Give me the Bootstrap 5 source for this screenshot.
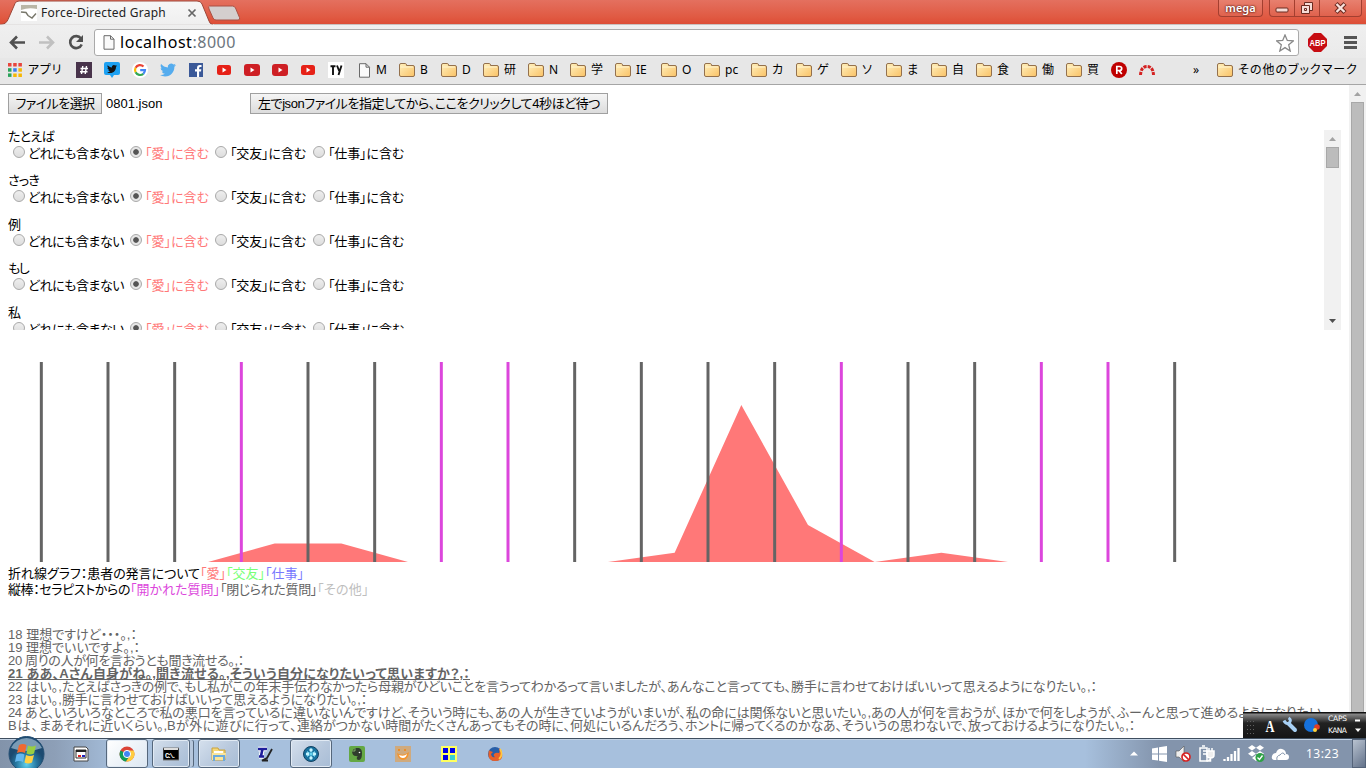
<!DOCTYPE html>
<html lang="ja">
<head>
<meta charset="utf-8">
<title>Force-Directed Graph</title>
<link href="https://cdn.jsdelivr.net/npm/bootstrap@5.3.0/dist/css/bootstrap.min.css" rel="stylesheet">
<style>
html,body{height:768px;overflow:hidden}
body{font-family:"Liberation Sans","Noto Sans CJK JP",sans-serif;font-size:13px;line-height:16px;color:#000;background:#fff}
svg{display:block;flex:none}
.ui{font-family:"Noto Sans","Noto Sans CJK JP",sans-serif}
.fit{display:inline-block;white-space:nowrap;font-feature-settings:"palt"}
.titlebar{height:25px;background:linear-gradient(#e4705f,#e05a43 70%,#dd4d35);border-bottom:1px solid #c9c0be}
.tabtitle{left:41px;top:5px;font-size:12px;color:#222}
.tabshape{left:0;top:0}
.capbtn{height:17px;border:1px solid #a33f30;border-top:0;background:linear-gradient(#e8806f,#e0624d);color:#fff}
.user{width:45px;font-size:11px;font-weight:600;text-shadow:0 0 2px #602018,0 0 2px #602018;margin-right:6px;border-radius:0 0 4px 4px}
.wins{width:93px;margin-right:4px;border-radius:0 0 4px 4px}
.wins>span{width:25px;height:16px;border-right:1px solid #a33f30}
.toolbar{height:33px;background:linear-gradient(#efefef,#eaeaea)}
.omni{left:94px;top:4px;width:1205px;height:27px;border:1px solid #aaa;border-radius:3px;background:#fff;font-size:16px}
.omni .fit{margin:-2px 0 0 5px}
.bookmarks{height:27px;background:#e7e7e7;border-bottom:1px solid #a5a5a5;box-sizing:border-box;font-size:12px;padding:0 0 2px 7px}
.bm{height:24px;white-space:nowrap;flex:none}
.bm .lab{margin-left:5px}
.page{height:653px}
.old{border:1px solid #a0a0a0;background:linear-gradient(#f5f5f5,#dcdcdc);height:21px;padding:0;line-height:18px;font-size:13px;color:#000;white-space:nowrap;text-align:center;flex:none}
.words{margin:16px 8px 0 8px;height:200px;overflow:hidden}
.word{height:44px}
.word>div{height:17px;line-height:14px}
.word>.opts{padding-left:5px;height:15px}
.opts>span{margin-bottom:2px}
.rad{width:12px;height:12px;border:1px solid #a9a9a9;border-radius:50%;background:linear-gradient(#eee,#ddd);flex:none;margin:0 3px 5px 0}
.rad.on{background:radial-gradient(circle,#555 0 2.4px,#e6e6e6 3.2px)}
.love{color:#ff7878}.friend{color:#78ff78}.work{color:#7878ff}.openq{color:#dc46dc}.closedq{color:#646464}.otherq{color:#bebebe}
.bar17{width:17px;background:#f1f1f1;flex:none}
.thumb{width:13px;background:#bcbcbc;border:1px solid #a8a8a8}
.chart{margin-top:32px}
.talk{color:#646464;line-height:13px;margin:30px 0 0 8px}
.talk>div{height:13px;white-space:nowrap}
.ime{right:0;top:712px;width:123px;height:26px;background:linear-gradient(#111 0 1px,#888 2px,#222 11px,#151515)}
.taskbar{height:30px;background:linear-gradient(90deg,#8293aa 0,#8d9fb7 55px,#a7c0dd 120px,#a7c0dd 1085px,#8394ac 1160px);border-top:1px solid #3f4e5f;box-shadow:inset 0 1px #c3d3e5}
.task{width:42px;height:29px;margin-right:4px;border:1px solid transparent;flex:none}
.task.run{border-color:#55677c;border-radius:3px;background:linear-gradient(135deg,#d5e0ed,#b6c7dc 60%,#a8bdd6);box-shadow:inset 0 0 0 1px #e1eaf4}
.task.act{background:linear-gradient(135deg,#fff,#dce7f2)}
.task.stack{width:38px;margin-right:8px;box-shadow:inset 0 0 0 1px #e1eaf4,4px 0 0 -1px #b6c7dc,5px 0 0 -1px #55677c}
.clock{color:#fff;font-size:12px;margin-left:14px}
.peek{width:14px;height:29px;margin-left:13px;border:1px solid #55647a;background:linear-gradient(135deg,#b8c2d0,#63728a)}
</style>
</head>
<body class="position-relative d-flex flex-column">
<svg width="0" height="0" class="position-absolute"><defs>
<linearGradient id="fg" x2="1" y2="1"><stop stop-color="#fff0bd"/><stop offset="1" stop-color="#fac266"/></linearGradient>
<linearGradient id="tg" x2="0" y2="1"><stop stop-color="#f7f7f7"/><stop offset="1" stop-color="#efefef"/></linearGradient>
<radialGradient id="orb" cy=".8"><stop stop-color="#5fd0ee"/><stop offset=".6" stop-color="#26769f"/><stop offset="1" stop-color="#1c4a70"/></radialGradient>
<symbol id="folder" viewBox="0 0 16 14"><path d="M.5 12V2q0-1.5 1.500-1.500h4.500q1 0 1 2h6.500q1.500 0 1.500 1.500v8q0 1.500-1.500 1.500H2Q.5 13.500.5 12z" fill="url(#fg)" stroke="#94714d"/><path d="M1.500 4h12.500" stroke="#fff5d0"/></symbol>
<symbol id="sheet" viewBox="0 0 12 15"><path d="M1 .7h6.500l3.500 3.500v10H1zM7.500.7v3.500H11" fill="#fafafa" stroke="#6a6a6a"/></symbol>
<symbol id="hash" viewBox="0 0 16 16"><path d="M0 0h16v16H0z" fill="#48334b"/><path d="M6.800 4 5.500 12M10.500 4 9.200 12M4.500 6.500h7.500M4 9.700h7.500" stroke="#fff" stroke-width="1.400"/></symbol>
<symbol id="birdp" viewBox="0 0 24 24"><path d="M23.950 4.570a10 10 0 0 1-2.820.78 4.960 4.960 0 0 0 2.160-2.720c-.95.55-2 .95-3.130 1.190a4.920 4.920 0 0 0-8.380 4.480C7.690 8.100 4.070 6.130 1.640 3.160a4.820 4.820 0 0 0-.67 2.480c0 1.710.87 3.210 2.190 4.100a4.900 4.900 0 0 1-2.230-.62v.06a4.920 4.920 0 0 0 3.950 4.830 5 5 0 0 1-2.210.08 4.940 4.940 0 0 0 4.600 3.420A9.870 9.870 0 0 1 0 19.540a14 14 0 0 0 7.550 2.210c9.050 0 14-7.500 14-13.980 0-.21 0-.42-.02-.63a9.940 9.940 0 0 0 2.420-2.570z"/></symbol>
<symbol id="bird" viewBox="0 0 16 16"><use href="#birdp" width="16" height="16" fill="#55acee"/></symbol>
<symbol id="tdeck" viewBox="0 0 16 16"><path d="M2 0h12q2 0 2 2v9q0 2-2 2h-4l-2 3-2-3H2q-2 0-2-2V2Q0 0 2 0z" fill="#1da1f2"/><use href="#birdp" x="3" y="2" width="10" height="10" fill="#141414"/></symbol>
<symbol id="goog" viewBox="0 0 16 16"><circle cx="8" cy="8" r="8" fill="#fff"/><g fill="none" stroke-width="2.200"><path d="M11.500 4.500A5 5 0 0 0 3.600 5.700" stroke="#ea4335"/><path d="M3.600 5.700a5 5 0 0 0 0 4.600" stroke="#fbbc05"/><path d="M3.600 10.300a5 5 0 0 0 7.700 1.500" stroke="#34a853"/><path d="M11.300 11.800A5 5 0 0 0 13 8.100H8.200" stroke="#4285f4"/></g></symbol>
<symbol id="fb" viewBox="0 0 16 16"><path d="M1 1h14v14H1z" fill="#3b5998"/><path d="M9 15V9.500H7V7.300h2V6q0-3 2.800-3H13.500v2h-1.200q-1.200 0-1.200 1.200v1.100h2.200l-.3 2.200h-1.900V15z" fill="#fff"/></symbol>
<symbol id="yt" viewBox="0 0 16 16"><rect x="1" y="3" width="14" height="10" rx="2.500" fill="#e62117"/><path d="m6.500 5.500 4 2.500-4 2.500z" fill="#fff"/></symbol>
<symbol id="yt2" viewBox="0 0 16 16"><rect y="2" width="16" height="12" rx="3" fill="#ce1f24"/><path d="m6.500 5.500 4 2.500-4 2.500z" fill="#fff"/></symbol>
<symbol id="ty" viewBox="0 0 16 16"><path d="M0 0h16v16H0z" fill="#fff"/><path d="M2.500 4.200h5M5 4v9M9 3.500l2.200 5.500M13.500 3.500l-3 9.500" stroke="#111" stroke-width="1.900" fill="none"/></symbol>
<symbol id="rr" viewBox="0 0 16 16"><circle cx="8" cy="8" r="8" fill="#bf0000"/><path d="M5.800 12V4.500h2.700q2.200 0 2.200 2t-2.200 2H5.800M8 8.500l2.800 3.500" stroke="#fff" stroke-width="1.700" fill="none"/></symbol>
<symbol id="arc" viewBox="0 0 16 16"><path d="M1.500 13Q2 4.500 8 4.500T14.500 13" fill="none" stroke="#d42222" stroke-width="3" stroke-dasharray="3.200 1"/></symbol>
<symbol id="apps" viewBox="0 0 16 16"><path d="M1 1h3.500v3.500H1zM6.200 1h3.500v3.500H6.200zM11.400 1h3.500v3.500h-3.500z" fill="#e8453c"/><path d="M1 6.200h3.500v3.500H1z" fill="#2aa35a"/><path d="M6.200 6.200h3.500v3.500H6.200z" fill="#3b7ded"/><path d="M11.400 6.200h3.500v3.500h-3.500z" fill="#f6b704"/><path d="M1 11.400h3.500v3.500H1z" fill="#2aa35a"/><path d="M6.200 11.400h3.500v3.500H6.200zM11.400 11.400h3.500v3.500h-3.500z" fill="#f6b704"/></symbol>
</defs></svg>

<header class="titlebar position-relative d-flex justify-content-end align-items-start flex-shrink-0">
  <svg class="tabshape position-absolute" width="245" height="25"><path d="M0 24.500q6 0 8-5L15 3.500Q16 1 19 1h178q4 0 5 3l7 17q1 3.500 4 3.500" fill="url(#tg)" stroke="#9c4638"/><path d="M0 25h214" stroke="#efefef"/>
  <path d="M209.500 6h23q2 0 3 2l4 9.500q1 2.500-1.500 2.500h-22q-2 0-3-2l-4-9q-1-3 .5-3z" fill="#d4cfce" stroke="#a95144"/>
  <path d="M21 5h16v16H21z" fill="#fff"/><path d="M21 5h16v4q-8-2-16 1z" fill="#b9b6a6"/><path d="M21 12l5 .5 2 3 4 2.500 4-4.500" fill="none" stroke="#77766a" stroke-width="1.400"/><path d="m188.500 9.500 7 7m0-7-7 7" stroke="#666" stroke-width="1.700"/></svg>
  <span class="tabtitle position-absolute ui"><span class="fit" data-w="125">Force-Directed Graph</span></span>
  <div class="capbtn user ui d-flex justify-content-center align-items-center">mega</div>
  <div class="capbtn wins d-flex"><span><svg width="24" height="16"><rect x="6" y="8" width="12" height="4" rx="1" fill="#f6dcd7" stroke="#6b2a20"/></svg></span><span><svg width="24" height="16" fill="#f6dcd7" stroke="#6b2a20"><path d="M9.500 2.500h8v8h-8z"/><path d="M6.500 5.500h8v8h-8zM9.500 8.500h2v2h-2z"/></svg></span><svg width="41" height="16"><path d="m16 3.500 9 9m0-9-9 9" stroke="#6b2a20" stroke-width="4.500"/><path d="m16.500 4 8 8m0-8-8 8" stroke="#f9e2dd" stroke-width="2.400"/></svg></div>
</header>

<nav class="toolbar position-relative flex-shrink-0">
  <svg width="1366" height="33"><g fill="none" stroke-width="2.600"><path d="M25 17.500H11m6-6-6 6 6 6" stroke="#505050"/><path d="M39 17.500h14m-6-6 6 6-6 6" stroke="#c0c0c0"/><path d="M81 13.500a6 6 0 1 0 .7 6" stroke="#505050"/></g><path d="M83 10v7h-7z" fill="#505050"/>
  <path d="m1314 8 7 0 6 6v7l-6 6h-7l-6-6v-7z" fill="#c70d12"/><text x="1309.500" y="21" font-size="9.500" font-weight="700" font-family="Liberation Sans" fill="#fff" textLength="16" lengthAdjust="spacingAndGlyphs">ABP</text><path d="M1344 12.500h13M1344 17.500h13M1344 22.500h13" stroke="#555" stroke-width="3"/></svg>
  <div class="omni ui position-absolute d-flex align-items-center justify-content-between"><div class="d-flex align-items-center"><svg class="ms-2" width="12" height="15"><use href="#sheet"/></svg><span class="fit" data-w="116">localhost<span class="text-secondary">:8000</span></span></div><svg class="me-1" width="18" height="18" viewBox="0 0 18 18"><path d="m9 1 2.300 5.500 6 .4-4.600 3.900L14.200 17 9 13.600 3.800 17l1.500-6.200L.7 6.900l6-.4z" fill="#fff" stroke="#888" stroke-width="1.300"/></svg></div>
</nav>

<nav class="bookmarks ui d-flex align-items-center flex-shrink-0" id="bookmarks"></nav>

<main class="page d-flex flex-shrink-0">
  <div class="flex-grow-1 overflow-hidden">
    <div class="d-flex align-items-center pt-2 ps-2"><button class="old" style="width:94px"><span class="fit" data-w="79">ファイルを選択</span></button><span class="ms-1" style="width:144px">0801.json</span><button class="old" style="width:358px"><span class="fit" data-w="342">左でjsonファイルを指定してから、ここをクリックして4秒ほど待つ</span></button></div>
    <div class="words d-flex"><div class="flex-grow-1" id="words"></div>
      <div class="bar17 d-flex flex-column align-items-center"><svg width="17" height="17"><path d="m5 11 3.500-4 3.500 4z" fill="#a3a3a3"/></svg><div class="thumb" style="height:21px"></div><svg class="mt-auto" width="17" height="17"><path d="m5 6 3.500 4L12 6z" fill="#505050"/></svg></div></div>
    <svg class="ms-2 chart" width="1200" height="200" id="chart"></svg>
    <div class="ms-2 pt-1"><div><span class="fit" data-w="192">折れ線グラフ：患者の発言について</span><span class="fit love" data-w="26">「愛」</span><span class="fit friend" data-w="39">「交友」</span><span class="fit work" data-w="39">「仕事」</span></div>
    <div><span class="fit" data-w="122">縦棒：セラピストからの</span><span class="fit openq" data-w="90">「開かれた質問」</span><span class="fit closedq" data-w="97">「閉じられた質問」</span><span class="fit otherq" data-w="52">「その他」</span></div></div>
    <div class="talk" id="talk"></div>
  </div>
  <div class="bar17 d-flex flex-column align-items-center"><svg width="17" height="17"><path d="m5 11 3.500-4 3.500 4z" fill="#a3a3a3"/></svg><div class="thumb flex-grow-1"></div></div>
</main>

<aside class="ime position-absolute"><svg width="123" height="26"><path d="M4 5.500h9M4 9.500h9M4 13.500h9M4 17.500h9M4 21.500h9" stroke="#606060" stroke-dasharray="1 2"/><text x="22.500" y="20" font-size="17" font-weight="700" font-family="Liberation Serif" fill="#fff" textLength="9" lengthAdjust="spacingAndGlyphs">A</text><path d="m46 12 6 6" stroke="#a8d0f4" stroke-width="4" stroke-linecap="round"/><path d="M41 8.500q2 4 5 2.500 3-3-.5-5" stroke="#a8d0f4" stroke-width="3" fill="none"/><circle cx="68" cy="13" r="7" fill="#1671dc"/><circle cx="74" cy="15" r="2.800" fill="#df3d24"/><circle cx="72" cy="18" r="2" fill="#ffd23b"/><g font-family="DejaVu Sans" font-size="7.500" fill="#fff"><text x="85" y="9" textLength="19">CAPS</text><text x="85" y="21" textLength="19">KANA</text></g><path d="M112 8.500h5" stroke="#fff" stroke-width="2"/><path d="M112 16.500h6l-3 3.500z" fill="#fff"/></svg></aside>

<footer class="taskbar d-flex align-items-center flex-shrink-0 position-relative">
  <svg width="60" height="30" overflow="visible"><circle cx="26.500" cy="15" r="17.500" fill="url(#orb)" stroke="#244f73"/><path d="M11 9a17 17 0 0 1 31 0q-15 6-31 0" fill="#b9d2e2" opacity=".6"/><path d="M19 6q4-2 7.500 0L25 14q-4-2-8 0z" fill="#f06a31"/><path d="M28 6.500q4 2 8 0l-2 8q-4 2-7.500 0z" fill="#99cf42"/><path d="M16.500 15.500q4-2 8 0L23 23q-4-2-8 0z" fill="#64b7ef"/><path d="M26 16q4 2 8 0l-2 7.500q-4 2-7.500 0z" fill="#ffd044"/></svg>
  <div class="d-flex" id="tasks"></div>
  <div class="ms-auto d-flex align-items-center h-100"><svg width="172" height="29"><g transform="translate(6 0)"><path d="m4 16.500 4-4 4 4z" fill="#fff"/><path d="m26 9.500 6-1v6h-6zM33 8.300l8-1.300v7.500h-8zM26 15.500h6v6l-6-.8zM33 15.500h8V23l-8-1.300z" fill="#fff"/><path d="M50 12h3l5-5v16l-5-5h-3z" fill="#eee" stroke="#555" stroke-width=".6"/><circle cx="60" cy="18" r="4" fill="#fff" stroke="#d72121" stroke-width="1.700"/><path d="m57 15 6 6" stroke="#d72121" stroke-width="1.700"/><path d="M74 9h7v13h-7zM76 7h3M77 12h4M77 15h4" fill="none" stroke="#fff" stroke-width="1.500"/><path d="M81 12h7v4q0 3-3.500 3T81 16zM83 9v3m3-3v3m-1.500 7v3h-4" stroke="#fff" stroke-width="1.500" fill="#eee"/><path d="M98.500 20v2M102 18v4M105.500 15v7M109 12v10M112.500 9v13" stroke="#fff" stroke-width="2.300"/><path d="m126 6 4 2.800-4 2.800-4-2.800zM134 6l4 2.800-4 2.800-4-2.800zM126 12l4 2.800-4 2.800-4-2.800zM134 12l4 2.800-4 2.800-4-2.800zM130 16l4 3-4 3-4-3z" fill="#fff"/><circle cx="134" cy="18.500" r="4.500" fill="#2fa146"/><path d="m131.500 18.500 2 2 3-4" stroke="#fff" fill="none" stroke-width="1.300"/><path d="M148 21q-3-1-2-4t4-3q2-5 6-4t4 5q3 0 3 3t-3 3z" fill="#fff"/><path d="M151 21q-1-4 3-5 3-4 5 0" stroke="#8496ad" fill="none"/></g></svg>
  <span class="clock ui"><span class="fit" data-w="33">13:23</span></span><div class="peek"></div></div>
</footer>

<script>
const $=id=>document.getElementById(id);
// bookmark bar: [left edge, icon, label, label width]
const bms=[[7,'apps','アプリ',34],[76,'hash'],[104,'tdeck'],[132,'goog'],[160,'bird'],[188,'fb'],[216,'yt'],[244,'yt2'],[272,'yt2'],[300,'yt'],[328,'ty'],[358,'sheet','M'],
[399,'folder','B'],[441,'folder','D'],[483,'folder','研'],[528,'folder','N'],[570,'folder','学'],[615,'folder','IE'],[661,'folder','O'],[704,'folder','pc'],[751,'folder','カ'],[796,'folder','ゲ'],[841,'folder','ソ'],[886,'folder','ま'],[931,'folder','自'],[976,'folder','食'],[1021,'folder','働'],[1066,'folder','買'],[1111,'rr'],[1139,'arc'],[1193,'','»'],[1217,'folder','その他のブックマーク',120]];
$('bookmarks').innerHTML=bms.map((b,i)=>{const w=(bms[i+1]?bms[i+1][0]:1366)-b[0],h=b[1]=='folder'?14:b[1]=='sheet'?15:16,iw=b[1]=='sheet'?13:16;
return `<div class="bm d-flex align-items-center" style="width:${w}px">${b[1]?`<svg width="${iw}" height="${h}"><use href="#${b[1]}"/></svg>`:''}${b[2]?`<span class="${b[1]?'lab':''}"><span class="fit" ${b[3]?`data-w="${b[3]}"`:''}>${b[2]}</span></span>`:''}</div>`}).join('');
// word list
const opts=[['どれにも含まない',96,6],['「愛」に含む',64,6],['「交友」に含む',76,7],['「仕事」に含む',76,0]];
$('words').innerHTML=[['たとえば',46],['さっき',31],['例',13],['もし',20],['私',13]].map(w=>`<div class="word"><div><span class="fit" data-w="${w[1]}">${w[0]}</span></div><div class="opts d-flex align-items-center">${opts.map((o,i)=>`<i class="rad ${i==1?'on':''}"></i><span style="margin-right:${o[2]}px" class="${i==1?'love':''}"><span class="fit" data-w="${o[1]}">${o[0]}</span></span>`).join('')}</div></div>`).join('');
// chart: area series and question bars
const step=1200/18,vals={4:18.5,5:18.5,10:9.3,11:157,12:37,14:9.3};
let s='M0 200';for(let i=0;i<=18;i++)s+=`L${i*step} ${200-(vals[i]||0)}`;
s=`<path d="${s}z" fill="#ff7878"/>`;
for(let i=0;i<18;i++)s+=`<path d="M${(i+.5)*step} 0v200" stroke="${[3,6,7,12,15,16].includes(i)?'#dc46dc':'#646464'}" stroke-width="3"/>`;
$('chart').innerHTML=s;
// conversation: text pieces with their right edges
const talk=[[['18 理想ですけど・・・。,：',137]],[['19 理想でいいですよ。,：',140]],[['20 周りの人が何を言おうとも聞き流せる。,：',244]],
[['21 ああ、Aさん自身がね。,',156],['聞き流せる。,',230],['そういう自分になりたいって思いますか？,：',470]],
[['22 はい。,',62],['たとえばさっきの例で、',184],['もし私がこの年末手伝わなかったら母親がひどいことを言うってわかるって言いましたが、',667],['あんなこと言ってても、',791],['勝手に言わせておけばいいって思えるようになりたい。,：',1097]],
[['23 はい。,',62],['勝手に言わせておけばいいって思えるようになりたい。,：',367]],
[['24 あと、',54],['いろいろなところで私の悪口を言っているに違いないんですけど、',408],['そういう時にも、',495],['あの人が生きていようがいまいが、',686],['私の命には関係ないと思いたい。,',871],['あの人が何を言おうが、',1002],['ほかで何をしようが、',1117],['ふーんと思って進めるようになりたい。',1328]],
[['Bは、',39],['まあそれに近いくらい。,',167],['Bが外に遊びに行って、',297],['連絡がつかない時間がたくさんあってもその時に、',570],['何処にいるんだろう、',685],['ホントに帰ってくるのかなあ、',842],['そういうの思わないで、',968],['放っておけるようになりたい。,：',1135]]];
$('talk').innerHTML=talk.map((l,i)=>{let x=8;return `<div class="${i==3?'fw-bold':''}">`+l.map(p=>{const w=p[1]-x;x=p[1];return `<span class="fit${i==3?' text-decoration-underline':''}" data-w="${w}">${p[0]}</span>`}).join('')+'</div>'}).join('');
// taskbar icons
const icons=[
['','<path d="M1 1h12l2 2v12H1z" fill="#fff" stroke="#444"/><path d="M3 4h10v8H3z" fill="#fff" stroke="#333"/><path d="M3 5h10" stroke="#222" stroke-width="2"/><path d="M5 9h3v2H5z" fill="#d22"/><path d="M9 9h3v2H9z" fill="#22b"/>'],
['run act','<circle cx="8" cy="8" r="7.500" fill="#db4437"/><path d="M8 8 1.500 4.500A7.500 7.500 0 0 0 7 15.500L11 9.500z" fill="#0f9d58"/><path d="M8 4.500h6.600A7.500 7.500 0 0 1 7 15.500l4-6z" fill="#ffcd40"/><circle cx="8" cy="8" r="3.600" fill="#4285f4" stroke="#fff"/>'],
['run stack','<path d="M0 2h16v12H0z" fill="#000" stroke="#777"/><path d="M1 3h14" stroke="#ddd" stroke-width="2"/><text x="2" y="11.500" font-size="7" font-weight="700" fill="#fff" font-family="Liberation Mono" textLength="11">C:\\.</text>'],
['run','<path d="M1 2h6l1 2h6v10H1z" fill="#f6d877" stroke="#c8a23f"/><path d="M3 5h9v4H3z" fill="#fff"/><path d="M1 7h14l-1 7H1z" fill="#fae59a"/><path d="M3 15v-5h10v5" fill="none" stroke="#6baade" stroke-width="2"/>'],
['','<path d="M1 3h9M5.500 3 4 10M2 10.500h5" fill="none" stroke="#fff" stroke-width="4.500"/><path d="M1 3h9M5.500 3 4 10M2 10.500h5" fill="none" stroke="#1d1d9c" stroke-width="2.600"/><path d="m15 3-5 9-5 2.500h6" stroke="#222" stroke-width="1.800" fill="none"/>'],
['run','<circle cx="8" cy="8" r="7.500" fill="#17719e" stroke="#124262"/><path d="M8 3v10M4 5.500l8 5M4 10.500l8-5" stroke="#6cdcf5"/><g fill="#c7f6ff"><circle cx="8" cy="4" r="1.700"/><circle cx="4.500" cy="8" r="1.700"/><circle cx="11.500" cy="8" r="1.700"/><circle cx="8" cy="12" r="1.700"/></g>'],
['','<rect width="16" height="16" rx="2" fill="#64a844"/><path d="M3 5 6 2h4q3 1 3 5 0 7-3 7-3 0-2-3h1q-1-1-2-1-4 0-4-5z" fill="#303e2d"/><path d="M3 5h3V2" fill="none" stroke="#8fc474" stroke-width=".8"/><circle cx="10.500" cy="6.500" r=".8" fill="#fff"/>'],
['','<path d="M0 0h16v16H0z" fill="#cfaa7e"/><path d="M2 7q6 4 12-1-1 8-6 8T2 7z" fill="#f3952f"/><path d="M4 9q5 2 8-1-1 4-4 4T4 9z" fill="#fff"/><path d="M4 3v2m6-2v2" stroke="#ed8d26" stroke-width="2"/>'],
['','<path d="M0 0h16v16H0z" fill="#ffff5f"/><path d="M2 2h5v5H2zM9 2h5v5H9zM2 9h5v5H2z" fill="#0000e6"/><path d="M9 9h5v5H9z" fill="#38cfd3"/>'],
['','<circle cx="8" cy="8" r="7" fill="#295fa8"/><path d="M2 4Q-.5 15 8 15t7-7q0-4-3-6 1 3 0 5-3-1-5 1-1 2 1 3-3 1-4-3l2-2-3-1z" fill="#e8602a"/><path d="M13 3q3.500 6-1 10" stroke="#ffc93f" fill="none" stroke-width="1.700"/>']];
$('tasks').innerHTML=icons.map(t=>`<div class="task ${t[0]} d-flex align-items-center justify-content-center"><svg width="16" height="16">${t[1]}</svg></div>`).join('');
// spread each label over its column width
document.querySelectorAll('.fit[data-w]').forEach(e=>{const w=+e.dataset.w,n=[...e.textContent].length;e.style.letterSpacing=(w-e.getBoundingClientRect().width)/n+'px'});
</script>
<script src="https://cdn.jsdelivr.net/npm/bootstrap@5.3.0/dist/js/bootstrap.bundle.min.js"></script>
</body>
</html>
